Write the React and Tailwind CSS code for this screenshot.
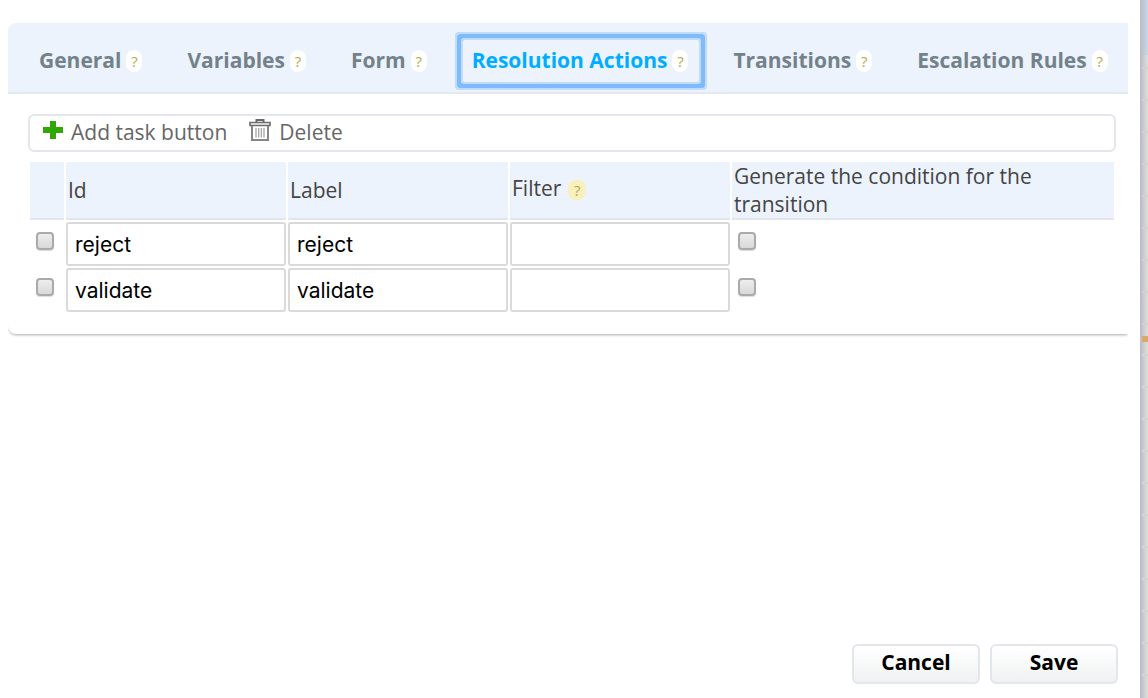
import { useState } from "react";

const TABS = ["General", "Variables", "Form", "Resolution Actions", "Transitions", "Escalation Rules"];

const ROWS = [
  { id: "reject", label: "reject", filter: "" },
  { id: "validate", label: "validate", filter: "" },
];

function PlusIcon() {
  return (
    <svg className="mb-1.5" width="20" height="18" viewBox="0 0 20 18" aria-hidden="true">
      <path d="M7 0h6v6h7v6h-7v6H7v-6H0V6h7z" fill="#2fa704" />
    </svg>
  );
}

function TrashIcon() {
  return (
    <svg className="mb-1.5" width="22" height="22" viewBox="0 0 22 22" fill="none" aria-hidden="true">
      <path d="M7.5 3V1h7v2" stroke="#6a6a6a" strokeWidth="2" />
      <path d="M1 3.5h20v3H1z" fill="#f4f4f4" stroke="#6f6f6f" strokeWidth="1.7" />
      <path d="M3 7v14h16V7" stroke="#858585" strokeWidth="2" />
      <path d="M7 9v9.5M9.7 9v9.5M12.4 9v9.5M15 9v9.5" stroke="#aaaaaa" strokeWidth="1.4" />
    </svg>
  );
}

function Tick({ label }) {
  return (
    <input
      type="checkbox"
      aria-label={label}
      className="block h-[18px] w-[18px] appearance-none rounded-[4px] border-2 border-[#aaaaaa] bg-linear-to-b from-[#ededed] to-[#d9d9d9] shadow-[0_1px_1px_#dddddd] checked:bg-[#4a90e2]"
    />
  );
}

function TextField({ label, value }) {
  return (
    <input
      type="text"
      aria-label={label}
      defaultValue={value}
      className="block h-11 w-full rounded-[3px] border-2 border-[#dadada] bg-white px-[7px] font-[Inter,sans-serif] text-[21px] text-black outline-none"
    />
  );
}

function HeaderCell({ children }) {
  return (
    <th className="h-[58px] border-b-2 border-[#e3e5ec] bg-[#ecf3fc] px-[2px] text-left align-middle font-normal">
      {children}
    </th>
  );
}

export default function App() {
  const [active, setActive] = useState("Resolution Actions");

  return (
    <div className="flex min-h-screen bg-white font-['Open_Sans','Noto_Sans',sans-serif] text-[#444444]">
      <main className="flex min-w-0 flex-1 flex-col pt-[23px] pl-2">
        <section className="mr-3 rounded-l-lg pb-5 shadow-[0_2px_3px_-1px_#aaaaaa] [clip-path:inset(0_0_-8px_0)]">
          <nav className="flex h-[71px] items-center gap-[25px] rounded-tl-lg border-b-2 border-[#e2e9f1] bg-[#ecf3fc] pt-[7px] pl-[22px]">
            {TABS.map((tab) => (
              <button
                key={tab}
                type="button"
                onClick={() => setActive(tab)}
                className={`flex h-[42px] items-center gap-[5px] pr-[11px] pl-[9px] text-[21px] leading-8 font-bold whitespace-nowrap outline-none ${
                  tab === active
                    ? "rounded-[1px] text-[#00adff] shadow-[0_0_0_2px_#c1dcfb,0_0_0_6px_#7ebbfb,0_0_0_8px_#c1dcfb]"
                    : "text-[#73828a]"
                }`}
              >
                <span className="pb-[2px]">{tab}</span>
                <span className="flex h-[22px] w-4 items-center justify-center rounded-full bg-white text-[15px] leading-5 font-medium text-[#b5a94c]">
                  ?
                </span>
              </button>
            ))}
          </nav>

          <div className="pt-5 pr-3 pl-5">
            <div className="flex h-[38px] items-center gap-[22px] rounded-md border-2 border-[#e5e5ec] px-[13px] text-[21px] text-[#666666]">
              <button type="button" className="flex items-center gap-2">
                <PlusIcon />
                Add task button
              </button>
              <button type="button" className="flex items-center gap-2">
                <TrashIcon />
                Delete
              </button>
            </div>

            <table className="mt-2 w-full table-fixed border-separate border-spacing-[2px] text-[21px] leading-7">
              <colgroup>
                <col className="w-[34px]" />
                <col className="w-[220px]" />
                <col className="w-[220px]" />
                <col className="w-[220px]" />
                <col />
              </colgroup>
              <thead>
                <tr>
                  <HeaderCell />
                  <HeaderCell>Id</HeaderCell>
                  <HeaderCell>Label</HeaderCell>
                  <HeaderCell>
                    <span className="flex items-center gap-[7px]">
                      <span className="pb-1">Filter</span>
                      <span className="flex h-5 w-[18px] items-center justify-center rounded-lg bg-[#f8f0bd] text-[15px] leading-5 font-medium text-[#b3a850]">
                        ?
                      </span>
                    </span>
                  </HeaderCell>
                  <HeaderCell>
                    <span className="block max-w-[320px]">Generate the condition for the transition</span>
                  </HeaderCell>
                </tr>
              </thead>
              <tbody>
                {ROWS.map((row) => (
                  <tr key={row.id}>
                    <td className="pt-[10px] pl-[6px] align-top">
                      <Tick label={`Select ${row.id}`} />
                    </td>
                    <td>
                      <TextField label="Id" value={row.id} />
                    </td>
                    <td>
                      <TextField label="Label" value={row.label} />
                    </td>
                    <td>
                      <TextField label="Filter" value={row.filter} />
                    </td>
                    <td className="pt-[10px] pl-[6px] align-top">
                      <Tick label={`Generate the condition for ${row.id}`} />
                    </td>
                  </tr>
                ))}
              </tbody>
            </table>
          </div>
        </section>

        <footer className="mt-auto flex justify-end gap-[10px] pr-[22px] pb-[14px]">
          {["Cancel", "Save"].map((name) => (
            <button
              key={name}
              type="button"
              className="h-10 w-32 rounded-md border-2 border-[#e5e5ec] bg-linear-to-b from-white to-[#f0f2f2] pb-1 text-[21px] leading-8 font-bold text-black"
            >
              {name}
            </button>
          ))}
        </footer>
      </main>

      <aside className="flex w-2 shrink-0 flex-col border-l-2 border-[#bdbdcb] bg-linear-to-r from-[#c4c6ca] to-[#dedede]">
        <div className="h-[55px] bg-linear-to-r from-[#b9c4d0] to-[#cbd8e3]" />
        <div className="h-[281px] bg-[repeating-linear-gradient(to_bottom,transparent_0_12px,#d2d2d5_12px_14px,transparent_14px_32px)]" />
        <div className="h-[6px] bg-[#dca869]" />
        <div className="flex-1 bg-[repeating-linear-gradient(to_bottom,transparent_0_12px,#d2d4d6_12px_14px,transparent_14px_32px)]" />
      </aside>
    </div>
  );
}
